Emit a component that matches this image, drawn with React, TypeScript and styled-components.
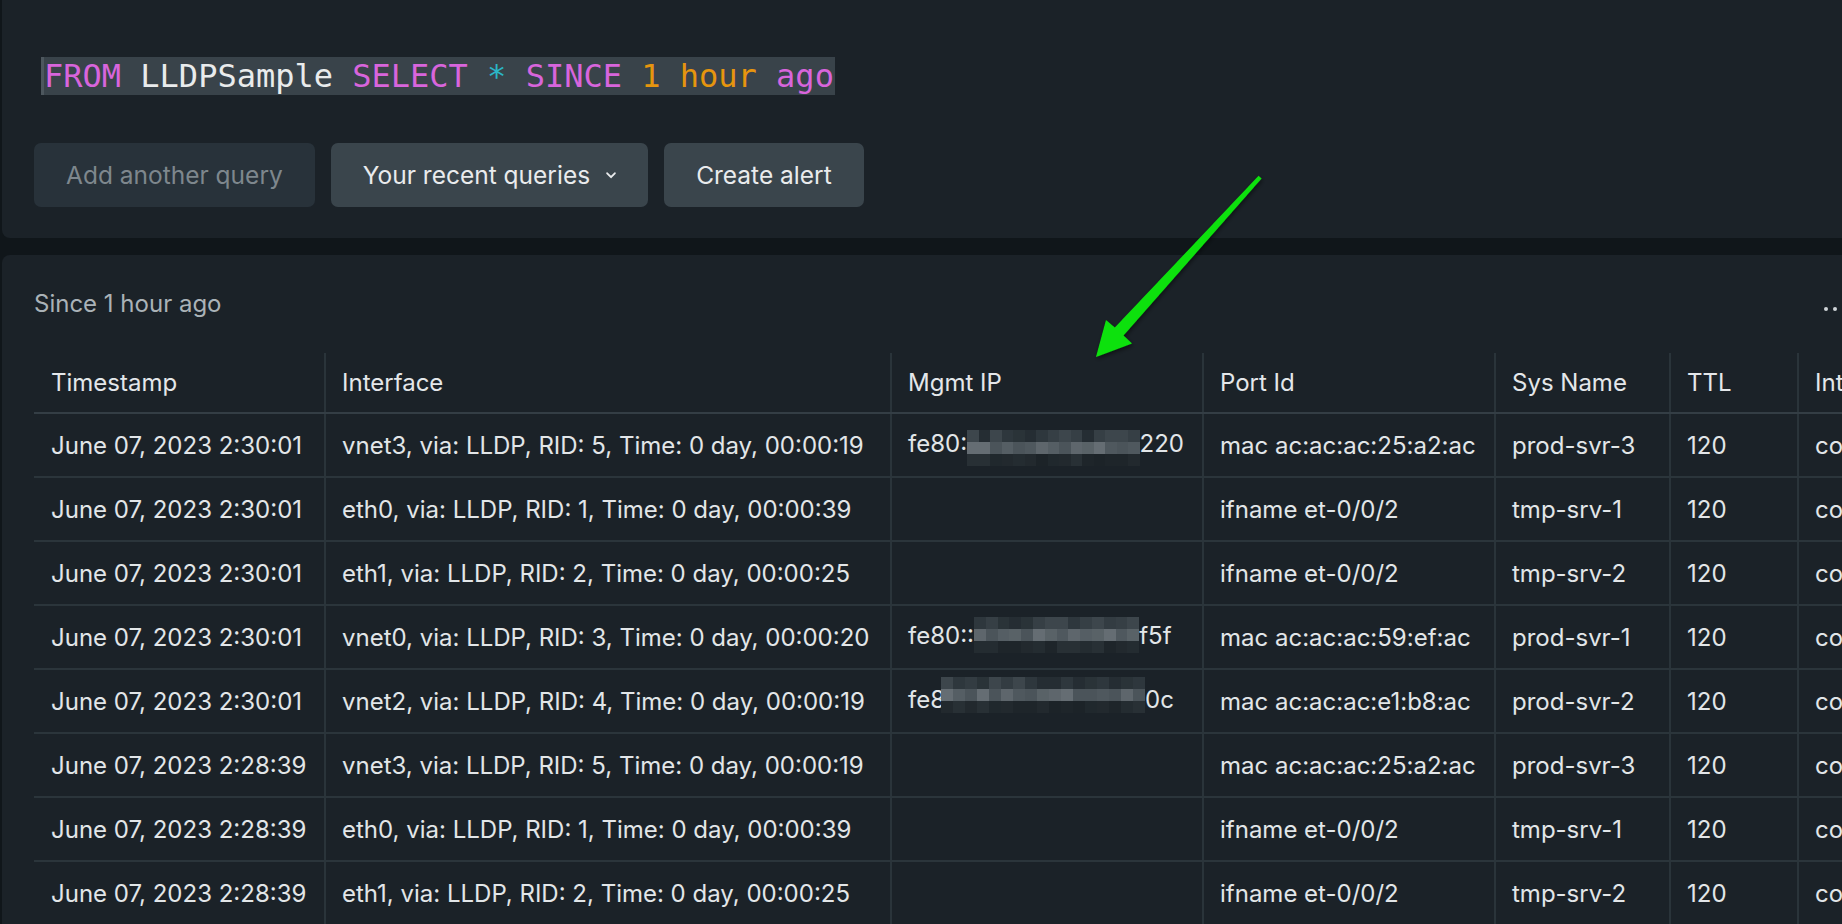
import React from "react";
import styled, { createGlobalStyle } from "styled-components";

const Global = createGlobalStyle`
  html, body { margin: 0; padding: 0; background: #0e1416; overflow: hidden; }
  body { font-family: Inter, "Noto Sans", "Liberation Sans", sans-serif; }
  #root { width: 1842px; height: 924px; overflow: hidden; position: relative; }
`;

const Page = styled.div`
  width: 1842px;
  height: 924px;
  display: flex;
  flex-direction: column;
  gap: 17px;
  padding-left: 2px;
  box-sizing: border-box;
  background: #10161a;
  position: relative;
`;

const TopPanel = styled.section`
  width: 1900px;
  background: #1b2228;
  border-radius: 0 0 0 8px;
  padding: 57px 0 31px 32px;
  box-sizing: border-box;
  display: flex;
  flex-direction: column;
  gap: 48px;
  flex-shrink: 0;
`;

const QueryLine = styled.div`
  padding-left: 7px;
  display: flex;
`;

const Highlight = styled.span`
  display: inline-block;
  font-family: "DejaVu Sans Mono", "Liberation Mono", monospace;
  font-size: 32px;
  line-height: 38px;
  height: 38px;
  background: #39434a;
  border-left: 3px solid #4d575e;
  padding-right: 1px;
  white-space: pre;
  color: #e8eaec;
`;

const Tok = styled.span<{ $k: "kw" | "id" | "op" | "num" }>`
  color: ${(p) =>
    p.$k === "kw" ? "#d865dc" : p.$k === "op" ? "#2bb6c6" : p.$k === "num" ? "#e6950e" : "#e9ebec"};
`;

const ButtonRow = styled.div`
  display: flex;
  gap: 16px;
`;

const Button = styled.button<{ $muted?: boolean }>`
  height: 64px;
  padding: 0 32px;
  border: none;
  border-radius: 7px;
  background: ${(p) => (p.$muted ? "#28323a" : "#3a454c")};
  color: ${(p) => (p.$muted ? "#7e878d" : "#e9ebed")};
  font-family: Inter, "Noto Sans", sans-serif;
  font-size: 24.5px;
  display: flex;
  align-items: center;
  gap: 16px;
  cursor: pointer;
`;

const ResultPanel = styled.section`
  width: 1900px;
  flex: 1;
  background: #1b2228;
  border-radius: 8px 0 0 0;
  padding: 34px 0 0 32px;
  box-sizing: border-box;
  display: flex;
  flex-direction: column;
  gap: 36px;
`;

const PanelHead = styled.div`
  display: flex;
  align-items: center;
  justify-content: space-between;
  height: 28px;
  width: 1812px;
`;

const Since = styled.div`
  font-size: 24px;
  color: #aab2b7;
`;

const Dots = styled.div`
  display: flex;
  gap: 5px;
  margin-top: 12px;
`;

const Dot = styled.span`
  width: 4px;
  height: 4px;
  border-radius: 50%;
  background: #cfd4d7;
`;

const Table = styled.table`
  border-collapse: collapse;
  table-layout: fixed;
  width: 1964px;
  font-size: 24px;
  color: #e2e6e8;
`;

const Th = styled.th<{ $w: number; $first?: boolean }>`
  box-sizing: border-box;
  width: ${(p) => p.$w}px;
  height: 60px;
  text-align: left;
  font-weight: 400;
  color: #e4e7ea;
  padding: 0 0 0 ${(p) => (p.$first ? 17 : 16)}px;
  border-left: ${(p) => (p.$first ? "none" : "2px solid #2a343a")};
  border-bottom: 2px solid #343e45;
  white-space: nowrap;
  overflow: hidden;
`;

const Td = styled.td<{ $first?: boolean }>`
  box-sizing: border-box;
  height: 64px;
  padding: 0 0 0 ${(p) => (p.$first ? 17 : 16)}px;
  border-left: ${(p) => (p.$first ? "none" : "2px solid #2a343a")};
  border-bottom: 2px solid #2b353b;
  white-space: nowrap;
  overflow: hidden;
`;

const BlurBox = styled.span<{ $cols: number; $cw: number; $shift: number; $pull: number }>`
  display: inline-grid;
  grid-template-columns: repeat(${(p) => p.$cols}, ${(p) => p.$cw}px);
  grid-auto-rows: 12px;
  vertical-align: middle;
  position: relative;
  top: ${(p) => p.$shift}px;
  margin-left: ${(p) => -p.$pull}px;
`;

const BlurCell = styled.span<{ $bg: string }>`
  background: ${(p) => p.$bg};
`;

const ArrowLayer = styled.svg`
  position: absolute;
  left: 0;
  top: 0;
  width: 1842px;
  height: 924px;
  pointer-events: none;
`;

const ROW_TONES = [
  ["#252d33", "#2e373d", "#363f45", "#3d464c", "#2a3338", "#333c42"],
  ["#4b545a", "#555e64", "#5e666c", "#4f585e", "#656d73", "#596267"],
  ["#1c2328", "#20282d", "#242c31", "#1e252a", "#283035", "#22292e"],
];

function Pixelate({
  cols,
  cw,
  seed,
  shift,
  pull = 0,
}: {
  cols: number;
  cw: number;
  seed: number;
  shift: number;
  pull?: number;
}) {
  const cells: React.ReactNode[] = [];
  for (let r = 0; r < 3; r++) {
    for (let c = 0; c < cols; c++) {
      const h = Math.abs(Math.sin(seed * 13.1 + r * 7.7 + c * 3.3) * 1000) % 1;
      const tones = ROW_TONES[r];
      cells.push(<BlurCell key={`${r}-${c}`} $bg={tones[Math.floor(h * tones.length)]} />);
    }
  }
  return (
    <BlurBox $cols={cols} $cw={cw} $shift={shift} $pull={pull}>
      {cells}
    </BlurBox>
  );
}

type Row = {
  ts: string;
  iface: string;
  ip?: React.ReactNode;
  port: string;
  sys: string;
};

const IF1 = "vnet3, via: LLDP, RID: 5, Time: 0 day, 00:00:19";
const IF_E0 = "eth0, via: LLDP, RID: 1, Time: 0 day, 00:00:39";
const IF_E1 = "eth1, via: LLDP, RID: 2, Time: 0 day, 00:00:25";

const rows: Row[] = [
  {
    ts: "June 07, 2023 2:30:01",
    iface: IF1,
    ip: (
      <>
        fe80:<Pixelate cols={15} cw={11.5} seed={1} shift={3} />
        220
      </>
    ),
    port: "mac ac:ac:ac:25:a2:ac",
    sys: "prod-svr-3",
  },
  { ts: "June 07, 2023 2:30:01", iface: IF_E0, port: "ifname et-0/0/2", sys: "tmp-srv-1" },
  { ts: "June 07, 2023 2:30:01", iface: IF_E1, port: "ifname et-0/0/2", sys: "tmp-srv-2" },
  {
    ts: "June 07, 2023 2:30:01",
    iface: "vnet0, via: LLDP, RID: 3, Time: 0 day, 00:00:20",
    ip: (
      <>
        fe80::<Pixelate cols={14} cw={11.8} seed={4} shift={-2} />
        f5f
      </>
    ),
    port: "mac ac:ac:ac:59:ef:ac",
    sys: "prod-svr-1",
  },
  {
    ts: "June 07, 2023 2:30:01",
    iface: "vnet2, via: LLDP, RID: 4, Time: 0 day, 00:00:19",
    ip: (
      <>
        fe8<Pixelate cols={17} cw={12} seed={7} shift={-6} pull={4} />
        0c
      </>
    ),
    port: "mac ac:ac:ac:e1:b8:ac",
    sys: "prod-svr-2",
  },
  { ts: "June 07, 2023 2:28:39", iface: IF1, port: "mac ac:ac:ac:25:a2:ac", sys: "prod-svr-3" },
  { ts: "June 07, 2023 2:28:39", iface: IF_E0, port: "ifname et-0/0/2", sys: "tmp-srv-1" },
  { ts: "June 07, 2023 2:28:39", iface: IF_E1, port: "ifname et-0/0/2", sys: "tmp-srv-2" },
];

const cols = [
  { name: "Timestamp", w: 291 },
  { name: "Interface", w: 566 },
  { name: "Mgmt IP", w: 312 },
  { name: "Port Id", w: 292 },
  { name: "Sys Name", w: 175 },
  { name: "TTL", w: 128 },
  { name: "Interface Status", w: 200 },
];

export default function App() {
  return (
    <>
      <Global />
      <Page>
        <TopPanel>
          <QueryLine>
            <Highlight>
              <Tok $k="kw">FROM</Tok> <Tok $k="id">LLDPSample</Tok> <Tok $k="kw">SELECT</Tok>{" "}
              <Tok $k="op">*</Tok> <Tok $k="kw">SINCE</Tok> <Tok $k="num">1 hour</Tok>{" "}
              <Tok $k="kw">ago</Tok>
            </Highlight>
          </QueryLine>
          <ButtonRow>
            <Button $muted>Add another query</Button>
            <Button>
              Your recent queries
              <svg width="10" height="7" viewBox="0 0 10 7" fill="none">
                <path d="M1.2 1.3 L5 5.2 L8.8 1.3" stroke="#e9ebed" strokeWidth="1.9" strokeLinecap="round" strokeLinejoin="round" />
              </svg>
            </Button>
            <Button>Create alert</Button>
          </ButtonRow>
        </TopPanel>
        <ResultPanel>
          <PanelHead>
            <Since>Since 1 hour ago</Since>
            <Dots>
              <Dot />
              <Dot />
              <Dot />
            </Dots>
          </PanelHead>
          <Table>
            <thead>
              <tr>
                {cols.map((c, i) => (
                  <Th key={c.name} $w={c.w} $first={i === 0}>
                    {c.name}
                  </Th>
                ))}
              </tr>
            </thead>
            <tbody>
              {rows.map((r, i) => (
                <tr key={i}>
                  <Td $first>{r.ts}</Td>
                  <Td>{r.iface}</Td>
                  <Td>{r.ip ?? ""}</Td>
                  <Td>{r.port}</Td>
                  <Td>{r.sys}</Td>
                  <Td>120</Td>
                  <Td>connected</Td>
                </tr>
              ))}
            </tbody>
          </Table>
        </ResultPanel>
        <ArrowLayer viewBox="0 0 1842 924">
          <defs>
            <filter id="ash" x="-20%" y="-20%" width="140%" height="140%">
              <feDropShadow dx="1" dy="2" stdDeviation="2" floodColor="#000" floodOpacity="0.5" />
            </filter>
          </defs>
          <polygon
            points="1258.6,175.8 1261.6,178.4 1123.5,335.5 1132,343.5 1096,357 1106,320 1114.8,327.6"
            fill="#0ce10c"
            filter="url(#ash)"
          />
        </ArrowLayer>
      </Page>
    </>
  );
}
